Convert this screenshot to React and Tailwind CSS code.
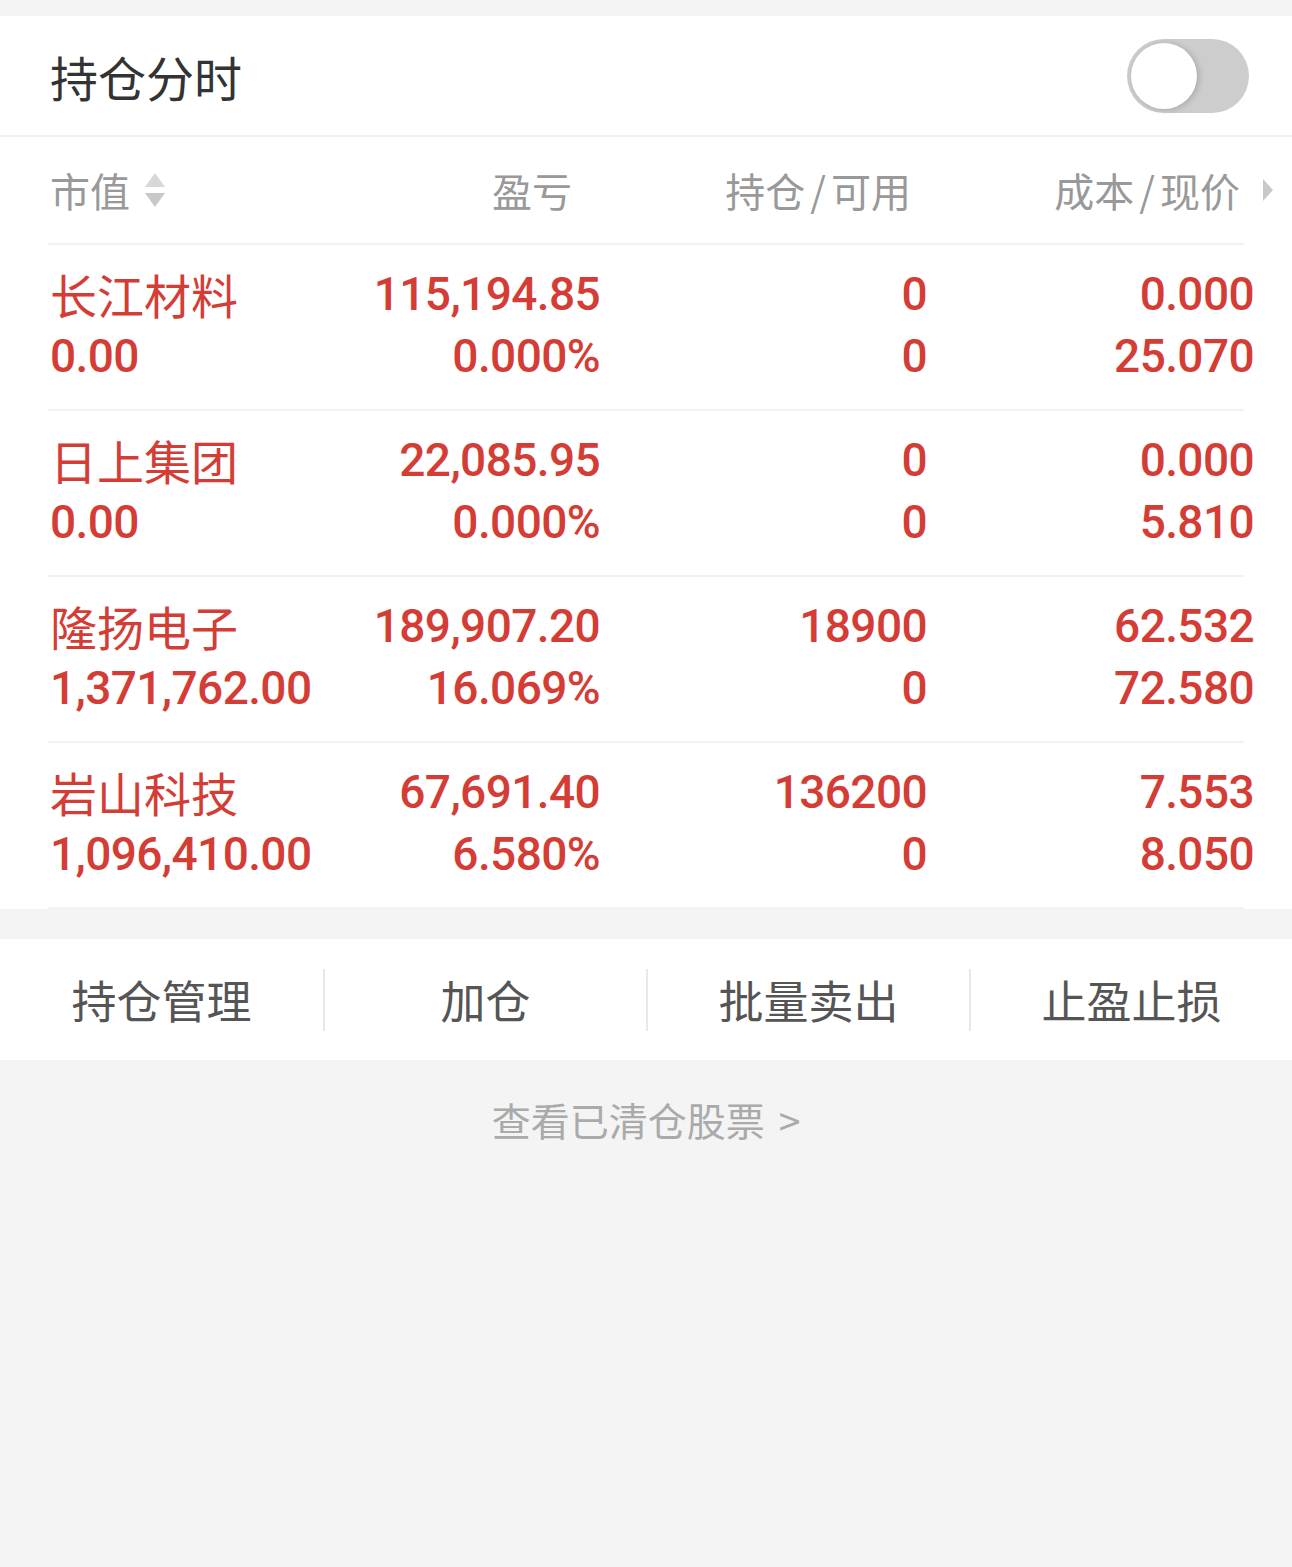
import { useState } from 'react'

const CJK = "font-['Noto_Sans_CJK_SC',sans-serif]"
const NUM = "font-['Roboto','Noto_Sans_CJK_SC',sans-serif] font-medium tracking-[-0.6px]"

const ROWS = [
  { name: '长江材料', value: '0.00', pnl: '115,194.85', pct: '0.000%', hold: '0', avail: '0', cost: '0.000', price: '25.070' },
  { name: '日上集团', value: '0.00', pnl: '22,085.95', pct: '0.000%', hold: '0', avail: '0', cost: '0.000', price: '5.810' },
  { name: '隆扬电子', value: '1,371,762.00', pnl: '189,907.20', pct: '16.069%', hold: '18900', avail: '0', cost: '62.532', price: '72.580' },
  { name: '岩山科技', value: '1,096,410.00', pnl: '67,691.40', pct: '6.580%', hold: '136200', avail: '0', cost: '7.553', price: '8.050' },
]

const ACTIONS = ['持仓管理', '加仓', '批量卖出', '止盈止损']

function Slash() {
  return <span className="mx-[5px] inline-block">/</span>
}

export default function App() {
  const [on, setOn] = useState(false)

  return (
    <div className={`min-h-screen bg-[#f4f4f4] pt-4 ${CJK}`}>
      {/* Title + switch */}
      <div className="flex h-[121px] items-center justify-between border-b-2 border-[#f2f2f2] bg-white pl-[50px] pr-[43px]">
        <span className="text-[48px] leading-none text-[#333]">持仓分时</span>
        <button
          onClick={() => setOn(!on)}
          className={`flex h-[74px] w-[122px] items-center rounded-full p-[4px] ${on ? 'justify-end bg-[#d43d35]' : 'justify-start bg-[#cdcdcd]'}`}
        >
          <span className="h-[66px] w-[66px] rounded-full bg-white shadow-[2px_1px_6px_rgba(0,0,0,0.18)]" />
        </button>
      </div>

      {/* Table */}
      <div className="bg-white">
        <div className="mx-[48px]">
          <div className="-mr-[10px] grid h-[106px] grid-cols-[284px_268px_327px_327px] items-center text-[40px] leading-none text-[#999]">
            <div className="flex items-center pl-[2px]">
              <span>市值</span>
              <svg width="22" height="40" viewBox="0 0 22 40" className="ml-[14px]">
                <path d="M11 3 L21 17 L1 17 Z" fill="#d8d8d8" />
                <path d="M1 23 L21 23 L11 37 Z" fill="#c8c8c8" />
              </svg>
            </div>
            <div className="pr-[28px] text-right">盈亏</div>
            <div className="pr-[16px] text-right">
              持仓<Slash />可用
            </div>
            <div className="relative pr-[14px] text-right">
              成本<Slash />现价
              <svg width="12" height="24" viewBox="0 0 12 24" className="absolute right-[-20px] top-1/2 -translate-y-1/2">
                <path d="M1 1 L11 12 L1 23 Z" fill="#c8c8c8" />
              </svg>
            </div>
          </div>

          {ROWS.map((r, i) => (
            <div
              key={r.name}
              className={`border-t-2 border-[#f2f2f2] ${i === ROWS.length - 1 ? 'border-b-2' : ''}`}
            >
              <div className="-mr-[10px] grid h-[164px] grid-cols-[284px_268px_327px_327px] content-center pb-[4px] text-[#d43d35]">
                <div className="pl-[2px]">
                  <div className="h-[62px] text-[47px] leading-[62px]">{r.name}</div>
                  <div className={`h-[62px] text-[46px] leading-[62px] ${NUM}`}>{r.value}</div>
                </div>
                <div className={`text-right text-[46px] leading-[62px] ${NUM}`}>
                  <div>{r.pnl}</div>
                  <div>{r.pct}</div>
                </div>
                <div className={`text-right text-[46px] leading-[62px] ${NUM}`}>
                  <div>{r.hold}</div>
                  <div>{r.avail}</div>
                </div>
                <div className={`text-right text-[46px] leading-[62px] ${NUM}`}>
                  <div>{r.cost}</div>
                  <div>{r.price}</div>
                </div>
              </div>
            </div>
          ))}
        </div>
      </div>

      {/* Actions */}
      <div className="mt-[30px] grid h-[121px] grid-cols-4 items-center bg-white">
        {ACTIONS.map((a, i) => (
          <div
            key={a}
            className={`flex h-[62px] items-center justify-center text-[45px] leading-none text-[#555] ${i > 0 ? 'border-l-2 border-[#e8e8e8]' : ''}`}
          >
            {a}
          </div>
        ))}
      </div>

      <div className="pt-[36px] text-center text-[39px] leading-[46px] text-[#aaa]">
        查看已清仓股票<span className="ml-[14px]">&gt;</span>
      </div>
    </div>
  )
}
